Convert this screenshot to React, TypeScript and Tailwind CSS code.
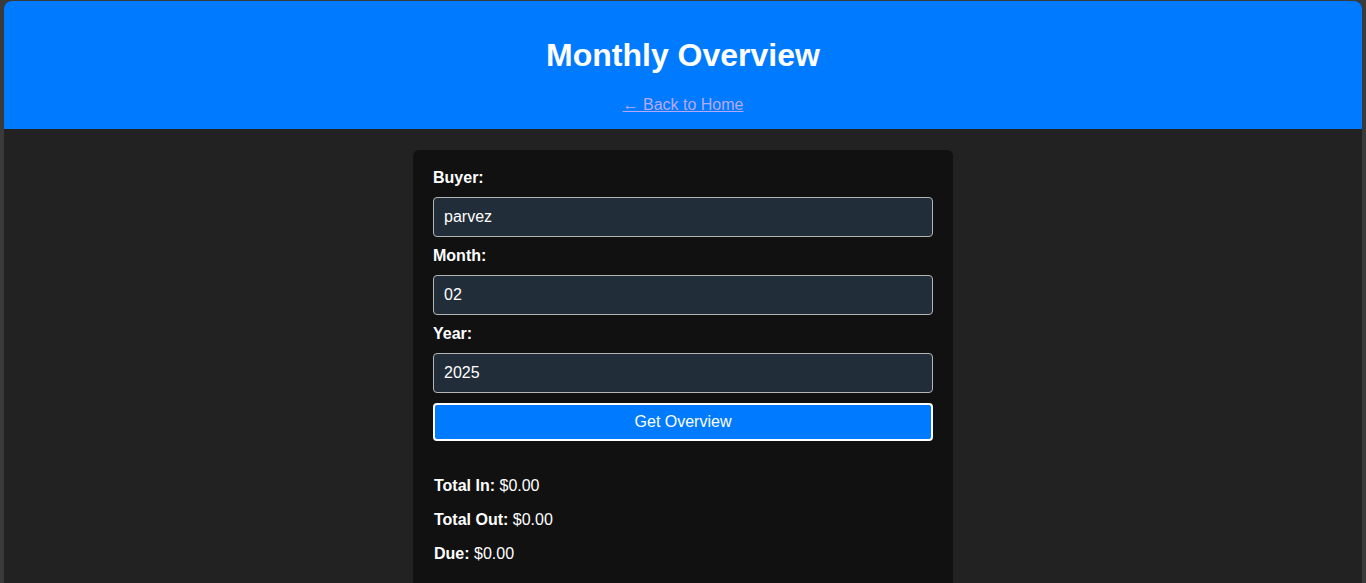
export default function App() {
  return (
    <div
      className="h-[583px] overflow-hidden bg-[#3a3a3a] px-[4px] pt-[1px]"
      style={{ fontFamily: '"Liberation Sans", Arial, sans-serif' }}
    >
      <div className="h-full overflow-hidden rounded-t-[8px] bg-[#222222]">
        <header className="h-[128px] bg-[#007bff] pt-[36px] text-center text-white">
          <h1 className="text-[32px] font-bold leading-[37px]">Monthly Overview</h1>
          <a href="#" className="mt-[22px] inline-block text-[16px] leading-[18px] text-[#b8a9f8] underline">
            ← Back to Home
          </a>
        </header>
        <main className="flex justify-center pt-[21px]">
          <div className="w-[540px] rounded-t-[6px] bg-[#111111] px-[20px] pt-[19px] pb-[20px] text-[16px] text-white">
            <form className="flex flex-col">
              <label className="mb-[10px] font-bold leading-[18px]">Buyer:</label>
              <input
                readOnly
                value="parvez"
                className="mb-[10px] h-[40px] rounded-[4px] border border-[#b5b5b5] bg-[#222d3a] px-[10px] text-white outline-none"
              />
              <label className="mb-[10px] font-bold leading-[18px]">Month:</label>
              <input
                readOnly
                value="02"
                className="mb-[10px] h-[40px] rounded-[4px] border border-[#b5b5b5] bg-[#222d3a] px-[10px] text-white outline-none"
              />
              <label className="mb-[10px] font-bold leading-[18px]">Year:</label>
              <input
                readOnly
                value="2025"
                className="mb-[10px] h-[40px] rounded-[4px] border border-[#b5b5b5] bg-[#222d3a] px-[10px] text-white outline-none"
              />
              <button
                type="button"
                className="h-[38px] rounded-[4px] border-2 border-white bg-[#007bff] text-white"
              >
                Get Overview
              </button>
            </form>
            <div className="mt-[36px] flex flex-col gap-[16px] pl-[1px] leading-[18px]">
              <p>
                <strong>Total In:</strong> $0.00
              </p>
              <p>
                <strong>Total Out:</strong> $0.00
              </p>
              <p>
                <strong>Due:</strong> $0.00
              </p>
            </div>
          </div>
        </main>
      </div>
    </div>
  );
}
